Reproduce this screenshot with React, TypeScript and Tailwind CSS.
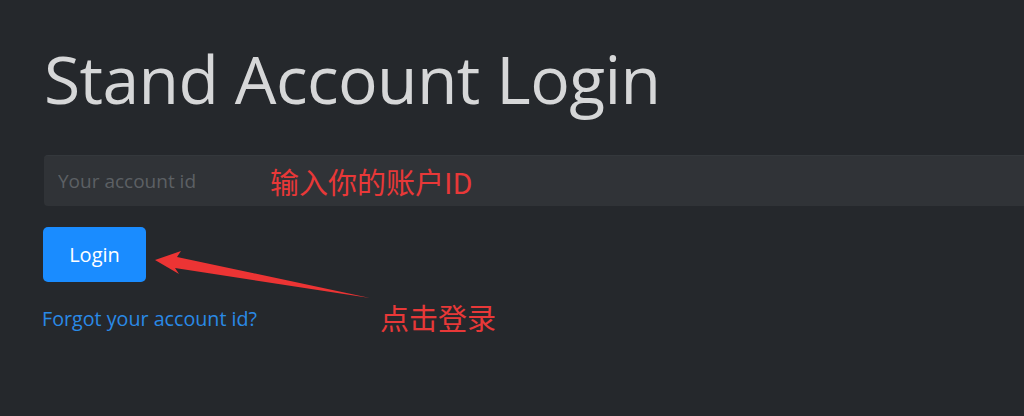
import React from 'react';

export default function App() {
  return (
    <div className="relative w-full h-[416px] overflow-hidden bg-[#25282c] font-['Open_Sans','Noto_Sans',sans-serif]">
      {/* Login form */}
      <div className="pl-[44px] pt-[36px] flex flex-col items-start">
        <h1 className="text-[66px] leading-[84px] font-normal text-[#d6d7d8] tracking-[-0.6px]">
          Stand Account Login
        </h1>

        <input
          type="text"
          placeholder="Your account id"
          className="mt-[35px] w-full h-[51px] rounded-l-[4px] bg-[#303337] border-t border-[#34383c] px-[14px] text-[19px] text-[#d6d7d8] placeholder:text-[#5c6064] outline-none"
        />

        <button className="mt-[21px] -ml-px w-[103px] h-[55px] rounded-[5px] bg-[#1a8cff] text-white text-[20px]">
          Login
        </button>

        <a href="#" className="mt-[23px] -ml-[2px] text-[19.7px] leading-[28px] text-[#2a8ae6]">
          Forgot your account id?
        </a>
      </div>

      {/* Annotations */}
      <span className="absolute left-[270px] top-[163px] text-[29px] leading-[36px] text-[#e83838] font-['Noto_Sans_CJK_SC',sans-serif]">
        输入你的账户ID
      </span>

      <svg className="absolute left-0 top-0" width="1024" height="416" viewBox="0 0 1024 416">
        <path d="M155 260 L181 251 L177 257 L370 298 L175 268 L179 274 Z" fill="#ec3434" />
      </svg>

      <span className="absolute left-[380px] top-[299px] text-[29px] leading-[36px] text-[#e83838] font-['Noto_Sans_CJK_SC',sans-serif]">
        点击登录
      </span>
    </div>
  );
}
